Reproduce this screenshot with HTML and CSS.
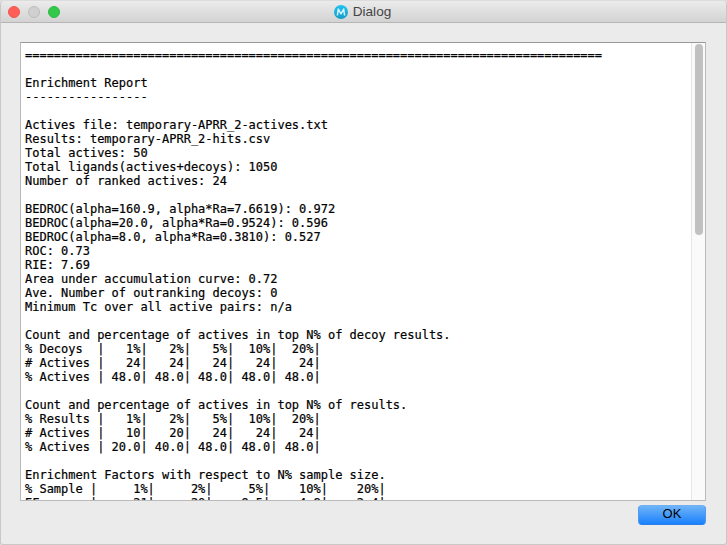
FILE: index.html
```html
<!DOCTYPE html>
<html lang="en">
<head>
<meta charset="utf-8">
<title>Dialog</title>
<link rel="stylesheet" href="styles.css">
</head>
<body>
<div class="window">
<header class="titlebar">
<div class="lights"><span class="light close"></span><span class="light minimize"></span><span class="light expand"></span></div>
<div class="title">
<svg class="logo" viewBox="0 0 14 14"><defs><linearGradient id="disc" x1="0" y1="0" x2="0" y2="1"><stop offset="0" stop-color="#22c3ee"/><stop offset="1" stop-color="#159cc8"/></linearGradient></defs><circle cx="7" cy="7" r="7" fill="url(#disc)"/><path d="M3.4 10.5L4.3 4L7 8.8L9.7 4L10.6 10.5" fill="none" stroke="#d5f3fc" stroke-width="1.5" stroke-linejoin="round"/></svg>
<span>Dialog</span>
</div>
</header>
<main class="content">
<div class="report">
<pre class="text">================================================================================

Enrichment Report
-----------------

Actives file: temporary-APRR_2-actives.txt
Results: temporary-APRR_2-hits.csv
Total actives: 50
Total ligands(actives+decoys): 1050
Number of ranked actives: 24

BEDROC(alpha=160.9, alpha*Ra=7.6619): 0.972
BEDROC(alpha=20.0, alpha*Ra=0.9524): 0.596
BEDROC(alpha=8.0, alpha*Ra=0.3810): 0.527
ROC: 0.73
RIE: 7.69
Area under accumulation curve: 0.72
Ave. Number of outranking decoys: 0
Minimum Tc over all active pairs: n/a

Count and percentage of actives in top N% of decoy results.
% Decoys  |   1%|   2%|   5%|  10%|  20%|
# Actives |   24|   24|   24|   24|   24|
% Actives | 48.0| 48.0| 48.0| 48.0| 48.0|

Count and percentage of actives in top N% of results.
% Results |   1%|   2%|   5%|  10%|  20%|
# Actives |   10|   20|   24|   24|   24|
% Actives | 20.0| 40.0| 48.0| 48.0| 48.0|

Enrichment Factors with respect to N% sample size.
% Sample |     1%|     2%|     5%|    10%|    20%|
EF       |     21|     20|    9.5|    4.8|    2.4|</pre>
<div class="scrollbar"><div class="thumb"></div></div>
</div>
<button class="ok">OK</button>
</main>
</div>
</body>
</html>
```
FILE: styles.css
```css
* { box-sizing: border-box; }
html, body { margin: 0; height: 100%; overflow: hidden; background: #dedede; }
.window {
  height: 545px;
  display: flex;
  flex-direction: column;
  background: #ebebeb;
  border: 1px solid #c8c8c8;
  border-top-color: #dcdcdc;
  border-radius: 5px 5px 3px 3px;
  overflow: hidden;
}
.titlebar {
  height: 22px;
  flex: none;
  display: grid;
  grid-template-columns: 1fr auto 1fr;
  align-items: center;
  background: linear-gradient(#ebebeb, #d3d3d3);
  border-bottom: 1px solid #b5b5b5;
}
.lights { display: flex; gap: 8px; padding-left: 7px; }
.light { width: 12px; height: 12px; border-radius: 50%; border: 1px solid; }
.close { background: #ff5f57; border-color: #ef5650; }
.minimize { background: #d0d0d0; border-color: #bcbcbc; }
.expand { background: #34c84a; border-color: #2dba41; }
.title {
  display: flex;
  align-items: center;
  gap: 5px;
  padding-right: 2px;
  font: 13.6px/20px "Liberation Sans", Arial, sans-serif;
  color: #454545;
}
.logo { width: 14px; height: 14px; }
.content { display: flex; flex-direction: column; padding: 19px 20px 0 19px; }
.report {
  height: 459px;
  display: flex;
  background: #fff;
  border: 1px solid #bababa;
  border-top-color: #989898;
  overflow: hidden;
}
.text {
  flex: 1;
  margin: 0;
  padding: 5px 0 0 4px;
  font: 12px/14px "DejaVu Sans Mono", monospace;
  letter-spacing: -0.012px;
  -webkit-text-stroke: 0.2px #000;
  color: #000;
}
.scrollbar {
  width: 14px;
  flex: none;
  padding: 1px 3px 0 2px;
  background: #fafafa;
  border-left: 1px solid #e7e7e7;
}
.thumb { width: 8px; height: 191px; margin-left: 1px; border-radius: 4px; background: #c1c1c1; }
.ok {
  align-self: flex-end;
  width: 68px;
  height: 20px;
  margin-top: 4px;
  padding: 0 0 2px;
  border: 1px solid;
  border-color: #72b1f0 #4f9bf0 #2b7de8;
  border-radius: 4px;
  background: linear-gradient(#6eb4f8, #1a81fd);
  font: 13px/16px "Liberation Sans", Arial, sans-serif;
  color: #000;
}
```
